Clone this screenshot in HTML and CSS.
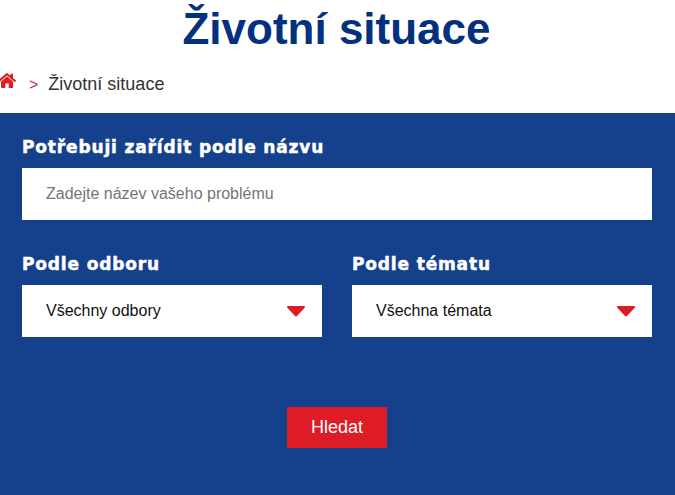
FILE: index.html
```html
<!DOCTYPE html>
<html lang="cs">
<head>
    <meta charset="UTF-8">
    <meta name="viewport" content="width=device-width, initial-scale=1.0">
    <title>Životní situace</title>
    <link rel="stylesheet" href="styles.css">
</head>
<body>
    <h1 class="page-title">Životní situace</h1>

    <!-- Breadcrumb -->
    <nav class="breadcrumb">
        <a href="#" class="home-link">
            <svg class="home-icon" viewBox="0 0 18 16" width="18" height="16">
                <path d="M9 3.6 3 8.6V14.2c0 .4.3.7.7.7H7.3V10.6h3.4v4.3h3.6c.4 0 .7-.3.7-.7V8.6Z"/>
                <path d="M17.8 7.3 15 5V1.2c0-.2-.2-.4-.4-.4h-1.8c-.2 0-.4.2-.4.4V3L9.9.6C9.4.1 8.600.1 8.100.6L.2 7.300c-.2.2-.2.400-.100.600l.8 1c.2.2.400.2.600.100L9 2.600l7.500 6.400c.2.1.400.1.600-.100l.8-1c.1-.2.100-.400-.100-.600Z"/>
            </svg>
        </a>
        <span class="separator">&gt;</span>
        <span class="current">Životní situace</span>
    </nav>

    <form class="search-panel">
        <label class="field-label" for="nazev">Potřebuji zařídit podle názvu</label>
        <input class="text-input" type="text" id="nazev" placeholder="Zadejte název vašeho problému">

        <div class="filters">
            <div class="filter">
                <label class="field-label" for="odbor">Podle odboru</label>
                <div class="select-wrap">
                    <select class="select-input" id="odbor">
                        <option>Všechny odbory</option>
                    </select>
                    <svg class="select-arrow" viewBox="0 0 18 11" width="18" height="11"><path d="M1 0H17C18 0 18.300 1 17.700 1.700L10 10C9.400 10.600 8.600 10.600 8 10L.3 1.700C-.3 1 0 0 1 0Z"/></svg>
                </div>
            </div>
            <div class="filter">
                <label class="field-label" for="tema">Podle tématu</label>
                <div class="select-wrap">
                    <select class="select-input" id="tema">
                        <option>Všechna témata</option>
                    </select>
                    <svg class="select-arrow" viewBox="0 0 18 11" width="18" height="11"><path d="M1 0H17C18 0 18.300 1 17.700 1.700L10 10C9.400 10.600 8.600 10.600 8 10L.3 1.700C-.3 1 0 0 1 0Z"/></svg>
                </div>
            </div>
        </div>

        <div class="actions">
            <button type="submit" class="btn">Hledat</button>
        </div>
    </form>
</body>
</html>
```

FILE: styles.css
```css
body {
    font-family: "Liberation Sans", Arial, sans-serif;
    background-color: #fff;
    margin: 0;
    padding: 0;
    overflow: hidden;
}

.page-title {
    margin: 0;
    height: 60px;
    padding-right: 2px;
    font-size: 44px;
    line-height: 58px;
    font-weight: bold;
    text-align: center;
    color: #03317e;
}

.breadcrumb {
    display: flex;
    align-items: center;
    height: 53px;
    padding-bottom: 4px;
    box-sizing: border-box;
    font-size: 18px;
    color: #333;
}

.home-link {
    display: flex;
    margin-left: -2px;
    margin-top: -8px;
}

.home-icon {
    fill: #dd1c26;
}

.separator {
    margin-left: 13px;
    margin-right: 10px;
    font-size: 16px;
    color: #b5333b;
}

.search-panel {
    height: 382px;
    padding: 22px 23px 0 22px;
    box-sizing: border-box;
    background-color: #15408b;
}

.field-label {
    display: block;
    height: 33px;
    font-family: "DejaVu Sans", sans-serif;
    font-size: 17px;
    line-height: 24px;
    font-weight: bold;
    letter-spacing: 0.850px;
    color: #fff;
    -webkit-text-stroke: 0.500px #fff;
}

.text-input,
.select-input {
    display: block;
    width: 100%;
    height: 52px;
    padding: 0 24px;
    box-sizing: border-box;
    border: none;
    border-radius: 0;
    background-color: #fff;
    font-family: inherit;
    font-size: 16px;
    color: #111;
}

.text-input::placeholder {
    color: #757575;
    opacity: 1;
}

.select-input {
    appearance: none;
    padding-bottom: 2px;
}

.filters {
    display: flex;
    gap: 30px;
    margin-top: 32px;
}

.filter {
    flex: 1;
}

.select-wrap {
    position: relative;
}

.select-arrow {
    position: absolute;
    right: 17px;
    top: 21px;
    fill: #dd1c26;
    pointer-events: none;
}

.actions {
    display: flex;
    justify-content: center;
    margin-top: 70px;
}

.btn {
    width: 100px;
    height: 41px;
    border: none;
    background-color: #dd1c26;
    color: #fff;
    font-family: inherit;
    font-size: 18px;
    cursor: pointer;
}
```
